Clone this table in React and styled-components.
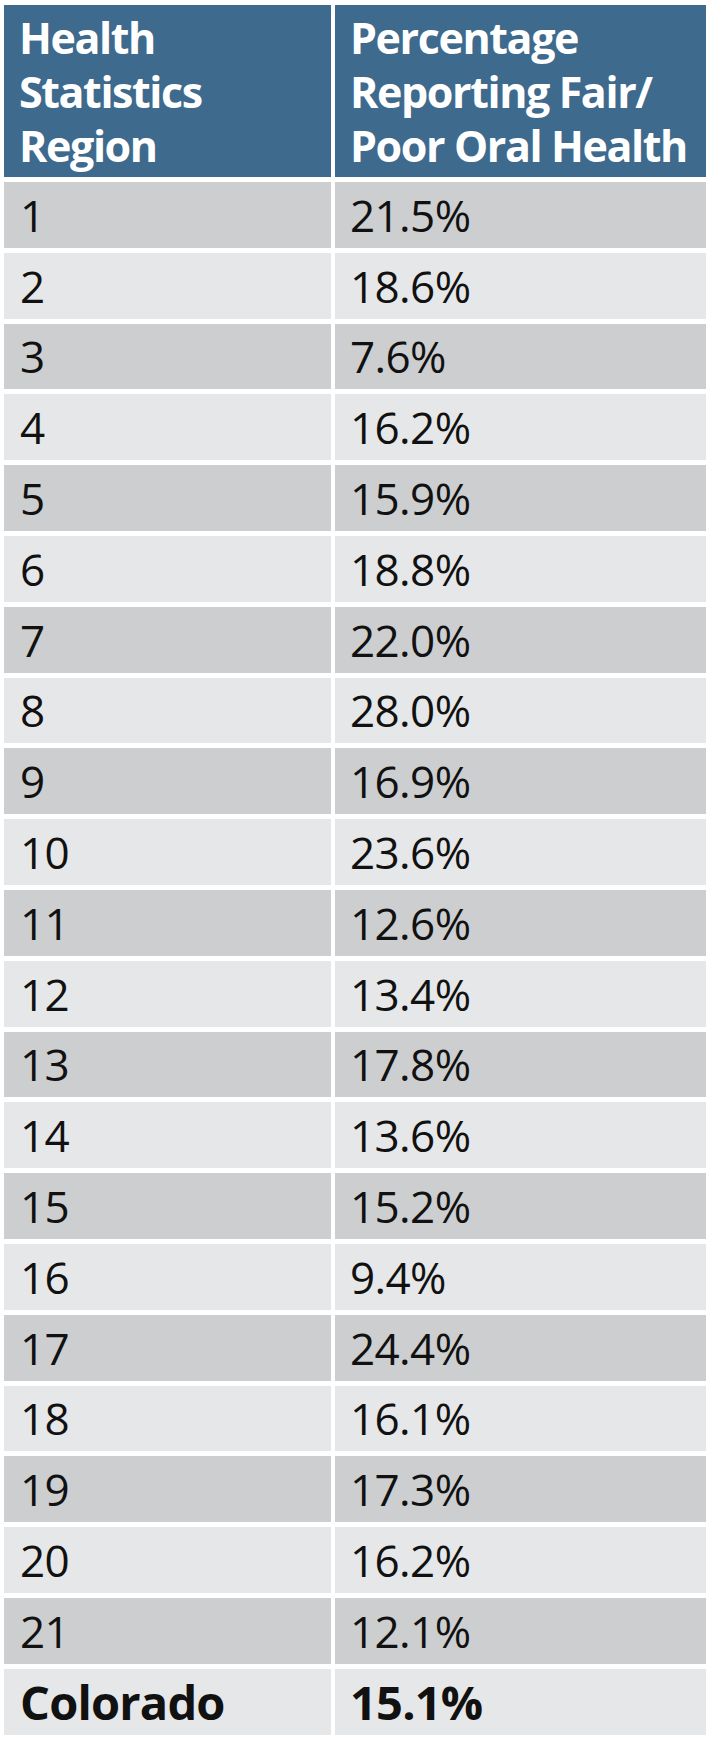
import React from "react";
import styled, { createGlobalStyle } from "styled-components";

const GlobalStyle = createGlobalStyle`
  body {
    margin: 0;
    background: #ffffff;
    font-family: "Open Sans", "Liberation Sans", sans-serif;
  }
`;

const Table = styled.div`
  display: grid;
  grid-template-columns: 327px 371px;
  grid-template-rows: 172px repeat(22, 65.8px);
  column-gap: 4px;
  row-gap: 5px;
  padding: 5px 0 0 4px;
`;

const HeadCell = styled.div`
  background: #3e6a8e;
  color: #ffffff;
  font-weight: 700;
  font-size: 43px;
  line-height: 54px;
  letter-spacing: -1.4px;
  padding: 6px 0 0 15px;
  white-space: nowrap;
`;

const Cell = styled.div`
  display: flex;
  align-items: center;
  padding-left: ${({ $wide }) => ($wide ? 15 : 16)}px;
  background: ${({ $dark }) => ($dark ? "#cdcecf" : "#e6e7e8")};
  color: #111111;
  font-size: ${({ $bold }) => ($bold ? 47 : 44)}px;
  font-weight: ${({ $bold }) => ($bold ? 700 : 400)};
  letter-spacing: ${({ $bold }) => ($bold ? -0.8 : -0.6)}px;
  white-space: nowrap;
`;

const rows = [
  ["1", "21.5%"],
  ["2", "18.6%"],
  ["3", "7.6%"],
  ["4", "16.2%"],
  ["5", "15.9%"],
  ["6", "18.8%"],
  ["7", "22.0%"],
  ["8", "28.0%"],
  ["9", "16.9%"],
  ["10", "23.6%"],
  ["11", "12.6%"],
  ["12", "13.4%"],
  ["13", "17.8%"],
  ["14", "13.6%"],
  ["15", "15.2%"],
  ["16", "9.4%"],
  ["17", "24.4%"],
  ["18", "16.1%"],
  ["19", "17.3%"],
  ["20", "16.2%"],
  ["21", "12.1%"],
];

export default function App() {
  return (
    <>
      <GlobalStyle />
      <Table>
        <HeadCell>
          Health
          <br />
          Statistics
          <br />
          Region
        </HeadCell>
        <HeadCell>
          Percentage
          <br />
          Reporting Fair/
          <br />
          Poor Oral Health
        </HeadCell>
        {rows.map(([region, pct], i) => (
          <React.Fragment key={region}>
            <Cell $dark={i % 2 === 0}>{region}</Cell>
            <Cell $dark={i % 2 === 0} $wide>
              {pct}
            </Cell>
          </React.Fragment>
        ))}
        <Cell $bold>Colorado</Cell>
        <Cell $bold $wide>
          15.1%
        </Cell>
      </Table>
    </>
  );
}
